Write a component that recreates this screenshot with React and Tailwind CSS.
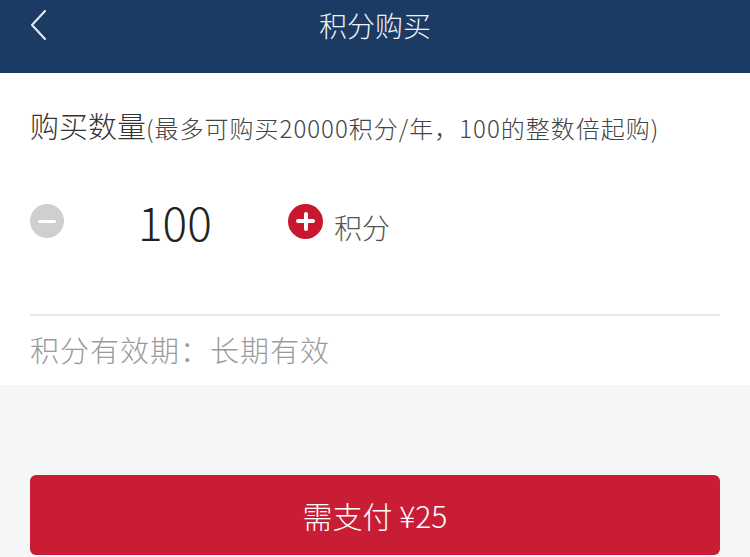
import React from "react";

const App = () => {
  return (
    <div
      className="w-[750px] h-[557px] overflow-hidden bg-[#f5f6f7]"
      style={{ fontFamily: "'Noto Sans CJK SC', 'Noto Sans', sans-serif" }}
    >
      {/* header */}
      <div className="relative h-[73px] bg-[#1b3a64] flex items-start justify-center">
        <button className="absolute left-[28px] top-[9px] w-[22px] h-[32px]">
          <svg viewBox="0 0 22 32" className="w-[22px] h-[32px]" fill="none">
            <path d="M17 2L4 16l13 14" stroke="#dfe6ef" strokeWidth="2.2" strokeLinecap="round" strokeLinejoin="round" />
          </svg>
        </button>
        <h1 className="mt-[7px] text-[28px] leading-[36px] font-light text-[#eef2f7]">积分购买</h1>
      </div>

      {/* form */}
      <div className="bg-white px-[30px] pt-[34px] h-[312px]">
        <div className="flex items-baseline text-[#333] leading-[36px] font-light">
          <span className="text-[29px]">购买数量</span>
          <span className="text-[24px] text-[#444] tracking-[1px]">(最多可购买20000积分/年，100的整数倍起购)</span>
        </div>

        <div className="flex items-center mt-[50px] h-[50px]">
          <div className="w-[34px] h-[34px] rounded-full bg-[#cfcfcf] flex items-center justify-center">
            <div className="w-[18px] h-[3px] bg-white rounded-full" />
          </div>
          <div className="ml-[74px] w-[116px] text-[46px] font-light text-[#222] leading-[50px]">100</div>
          <div className="ml-[34px] w-[35px] h-[35px] rounded-full bg-[#c8172f] flex items-center justify-center relative">
            <div className="absolute w-[19px] h-[4px] bg-white rounded-full" />
            <div className="absolute w-[4px] h-[19px] bg-white rounded-full" />
          </div>
          <span className="ml-[11px] mt-[12px] text-[28px] text-[#555] font-light leading-[36px]">积分</span>
        </div>

        <div className="mt-[68px] h-[2px] bg-[#e8e8e8]" />

        <div className="mt-[14px] text-[29px] tracking-[1px] text-[#9a9a9a] font-light leading-[38px]">积分有效期：长期有效</div>
      </div>

      {/* pay button */}
      <div className="px-[30px] pt-[90px]">
        <button className="w-full h-[80px] rounded-[6px] bg-[#c81d35] text-white text-[30px] font-light flex items-center justify-center">
          需支付 ¥25
        </button>
      </div>
    </div>
  );
};

export default App;
